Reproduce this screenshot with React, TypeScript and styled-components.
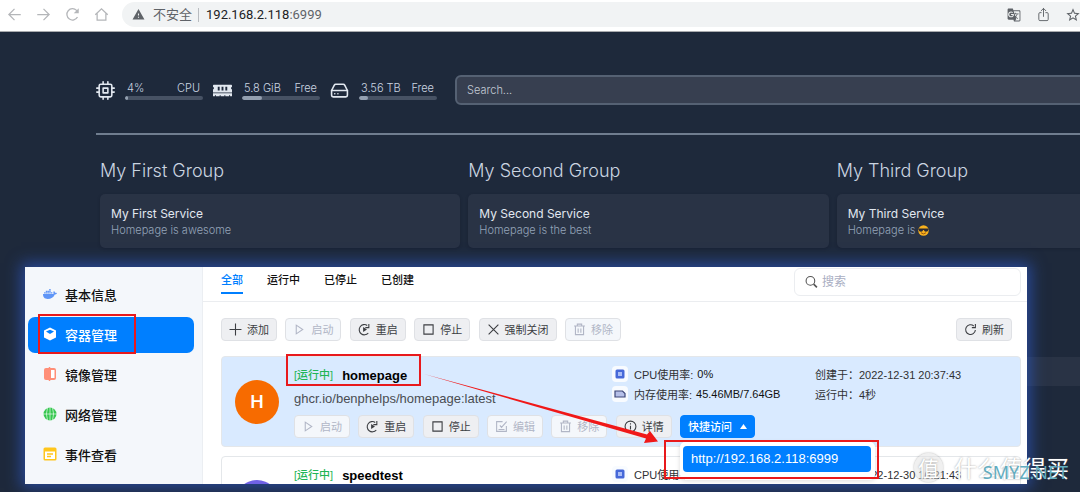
import React from "react";
import styled, { createGlobalStyle, css } from "styled-components";
import { FiCpu, FiHardDrive } from "react-icons/fi";
import { FaMemory, FaDocker } from "react-icons/fa";
import { MdGTranslate, MdStarBorder, MdWarning } from "react-icons/md";
import { IoShareOutline } from "react-icons/io5";

const Global = createGlobalStyle`
  *, *::before, *::after { box-sizing: border-box; }
  body { margin: 0; background: #1e293b; }
  button, input { font: inherit; }
  h2, h3, p, ul, dl, dd { margin: 0; padding: 0; }
`;

const uiFont = `"Liberation Sans", "Noto Sans CJK SC", sans-serif`;

const Page = styled.div`
  position: relative;
  min-height: 100vh;
  overflow: hidden;
  background: #1e293b;
  font-family: ${uiFont};
`;

/* ---------- Browser bar ---------- */

const BrowserBar = styled.header`
  display: flex;
  align-items: flex-start;
  height: 32px;
  padding: 2px 0 0 7px;
  background: #fff;
  border-bottom: 1px solid #a9abae;
`;

const NavButton = styled.button`
  display: grid;
  place-items: center;
  width: 29px;
  height: 25px;
  padding: 0 14px 0 0;
  border: 0;
  background: none;
  color: #b4b6b9;
`;

const AddressBar = styled.div`
  display: flex;
  flex: 1;
  align-items: center;
  height: 25px;
  margin-left: -1px;
  padding-left: 10px;
  border-radius: 13px 0 0 13px;
  background: #f1f3f4;
  color: #5f6368;
  font: 13px/25px Roboto, "Noto Sans CJK SC", sans-serif;
`;

const Insecure = styled.span`
  margin: 0 6px 0 8px;
`;

const Separator = styled.span`
  width: 1px;
  height: 14px;
  margin-right: 7px;
  background: #b9bcc0;
`;

const Host = styled.span`
  color: #202124;
`;

const AddressActions = styled.div`
  display: flex;
  gap: 15px;
  margin-left: auto;
  padding-right: 1px;
`;

const IconButton = styled.button`
  display: grid;
  place-items: center;
  width: 14px;
  height: 25px;
  padding: 0;
  border: 0;
  background: none;
  color: #5f6368;
`;

/* ---------- Dashboard ---------- */

const Dashboard = styled.main`
  width: 120%;
  padding: 43px 96px 0;
  color: #cbd5e1;
  font-family: Inter, sans-serif;
`;

const TopRow = styled.div`
  display: flex;
  align-items: center;
  padding-bottom: 28px;
  border-bottom: 2px solid #707d8f;
`;

const Resource = styled.div`
  display: flex;
  align-items: center;
  gap: 10px;
  margin-right: 10px;
  color: #e2e8f0;
`;

const ResourceBody = styled.div`
  width: 78px;
`;

const ResourceText = styled.div`
  display: flex;
  justify-content: space-between;
  padding: 0 3px 0 2px;
  color: #cbd5e1;
  font-size: 11px;
  font-weight: 300;
  line-height: 16px;
`;

const Meter = styled.div`
  height: 4px;
  border-radius: 2px;
  background: #475264;
  overflow: hidden;
`;

const MeterFill = styled.div`
  height: 100%;
  border-radius: 2px;
  background: #94a0b0;
`;

const SearchInput = styled.input`
  flex: 1;
  min-width: 0;
  height: 30px;
  margin-left: 8px;
  padding: 0 10px;
  border: 2px solid #556173;
  border-radius: 6px;
  outline: 0;
  background: #373f50;
  color: #e2e8f0;
  font-size: 11px;
  font-weight: 300;
  &::placeholder { color: #c3cad4; opacity: 1; }
`;

const Groups = styled.div`
  display: grid;
  grid-template-columns: repeat(3, 1fr);
  gap: 8px;
  padding: 24px 3px 0 4px;
`;

const GroupTitle = styled.h2`
  margin-bottom: 11px;
  color: #cbd5e1;
  font-size: 18px;
  font-weight: 300;
  line-height: 24px;
`;

const Service = styled.article`
  padding: 11px;
  border-radius: 5px;
  background: #293345;
  box-shadow: 0 1px 3px rgba(10, 16, 32, 0.25);
`;

const ServiceName = styled.h3`
  color: #e2e8f0;
  font-size: 12px;
  font-weight: 400;
  line-height: 18px;
`;

const ServiceNote = styled.p`
  display: flex;
  align-items: center;
  gap: 3px;
  color: #94a3b8;
  font-size: 11px;
  font-weight: 300;
  line-height: 14px;
`;

const LowerStrip = styled.div`
  height: 29px;
  margin: 109px 4px 0;
  border-radius: 5px;
  background: #293345;
`;

/* ---------- Container manager window ---------- */

const Window = styled.section`
  position: absolute;
  inset: 267px 53px 8px 25px;
  display: flex;
  background: #fff;
  box-shadow: 0 0 14px 4px rgba(46, 92, 206, 0.62);
  color: #303133;
  font-size: 11px;
`;

const Clip = styled.div`
  display: flex;
  flex: 1;
  min-width: 0;
  overflow: hidden;
`;

const Sidebar = styled.nav`
  display: flex;
  flex: none;
  flex-direction: column;
  gap: 4px;
  width: 178px;
  padding: 10px 8px 0 3px;
  border-right: 1px solid #ebeef2;
  background: #f4f7fb;
`;

const SideLink = styled.a<{ $active?: boolean }>`
  display: flex;
  flex: none;
  align-items: center;
  gap: 8px;
  height: 36px;
  padding: 0 0 2px 15px;
  border-radius: 7px;
  background: ${(p) => (p.$active ? "#007fff" : "none")};
  color: ${(p) => (p.$active ? "#fff" : "#111")};
  font-size: 13px;
  font-weight: 500;
  text-decoration: none;
`;

const Main = styled.div`
  flex: 1;
  min-width: 0;
`;

const TabBar = styled.div`
  display: flex;
  justify-content: space-between;
  height: 35px;
  padding: 0 6px 0 18px;
  border-bottom: 1px solid #ebedf0;
`;

const Tabs = styled.div`
  display: flex;
  gap: 24px;
`;

const Tab = styled.button<{ $active?: boolean }>`
  height: 27px;
  padding: 2px 0 0;
  border: 0;
  border-bottom: 2px solid ${(p) => (p.$active ? "#007fff" : "transparent")};
  background: none;
  color: ${(p) => (p.$active ? "#007fff" : "#111")};
  font-weight: 500;
  line-height: 23px;
`;

const SearchBox = styled.label`
  display: flex;
  align-items: center;
  gap: 4px;
  width: 227px;
  height: 28px;
  margin-top: 1px;
  padding: 0 10px;
  border: 1px solid #ebedf0;
  border-radius: 6px;
  color: #555;
`;

const SearchField = styled.input`
  flex: 1;
  min-width: 0;
  padding: 0;
  border: 0;
  outline: 0;
  background: none;
  font-size: 12px;
  &::placeholder { color: #a9aec2; opacity: 1; }
`;

const Toolbar = styled.div`
  display: flex;
  justify-content: space-between;
  padding: 16px 15px 15px 18px;
`;

const Actions = styled.div<{ $width: number }>`
  display: flex;
  justify-content: space-between;
  width: ${(p) => p.$width}px;
`;

const Button = styled.button<{ $primary?: boolean }>`
  display: flex;
  align-items: center;
  justify-content: center;
  gap: 5px;
  min-width: 56px;
  height: 23px;
  padding: 0 7px 1px;
  border: 1px solid #dfe1e5;
  border-radius: 4px;
  background: #eeeff2;
  color: #3c3e42;
  white-space: nowrap;
  &:disabled {
    background: #f4f7fb;
    color: #b1b6c6;
  }
  ${(p) =>
    p.$primary &&
    css`
      gap: 8px;
      min-width: 73px;
      border-color: #007fff;
      background: #007fff;
      color: #fff;
      font-weight: 500;
    `}
`;

const Cards = styled.div`
  display: flex;
  flex-direction: column;
  gap: 9px;
  padding: 0 6px 0 18px;
`;

const Card = styled.article<{ $selected?: boolean }>`
  display: flex;
  gap: 15px;
  height: 91px;
  padding: 7px 12px 6px 13px;
  border: 1px solid #e4e7ea;
  border-radius: 4px;
  background: ${(p) => (p.$selected ? "#d9eaff" : "#fff")};
`;

const Avatar = styled.div<{ $color: string }>`
  display: grid;
  flex: none;
  place-items: center;
  align-self: center;
  width: 44px;
  height: 44px;
  border-radius: 50%;
  background: ${(p) => p.$color};
  color: #fff;
  font: 500 19px/44px Roboto, sans-serif;
`;

const CardBody = styled.div`
  flex: 1;
  min-width: 0;
`;

const Details = styled.div`
  display: grid;
  grid-template-columns: 318px 203px 1fr;
  margin-bottom: 5px;
`;

const TitleLine = styled.h3`
  display: flex;
  align-items: center;
  gap: 9px;
  color: #000;
  font-size: 13px;
  line-height: 23px;
`;

const State = styled.span`
  color: #1fb556;
  font-size: 11px;
  font-weight: 500;
`;

const ImageName = styled.p`
  color: #4a4d52;
  font-size: 13px;
  line-height: 23px;
`;

const Fact = styled.div`
  display: flex;
  align-items: center;
  height: 20px;
  white-space: nowrap;
`;

const FactIcon = styled.span`
  display: grid;
  place-items: center;
  width: 16px;
  height: 16px;
  margin-right: 6px;
  border-radius: 4px;
  background: #f8fbff;
`;

const FactValue = styled.span`
  margin-left: 4px;
  color: #111;
`;

const Menu = styled.div`
  position: relative;
`;

const MenuPanel = styled.div`
  position: absolute;
  z-index: 2;
  top: 27px;
  left: 0;
  width: 195px;
  padding: 4px 4px 8px 3px;
  border-radius: 5px;
  background: #fff;
  box-shadow: 0 1px 5px rgba(0, 0, 0, 0.14);
`;

const MenuLink = styled.a`
  display: block;
  padding: 0 8px;
  border-radius: 4px;
  background: #007fff;
  color: #fff;
  font-size: 13px;
  line-height: 26px;
  text-decoration: none;
`;

/* ---------- Annotations over the page ---------- */

const Marker = styled.div<{ $x: number; $y: number; $w: number; $h: number }>`
  position: absolute;
  z-index: 3;
  left: ${(p) => p.$x}px;
  top: ${(p) => p.$y}px;
  width: ${(p) => p.$w}px;
  height: ${(p) => p.$h}px;
  border: 2px solid #e8191c;
  pointer-events: none;
`;

const Arrow = styled.svg`
  position: absolute;
  z-index: 3;
  left: 424px;
  top: 372px;
  pointer-events: none;
`;

const Watermark = styled.div`
  position: absolute;
  z-index: 4;
  right: 11px;
  bottom: 8px;
  display: flex;
  align-items: center;
  gap: 11px;
  color: #fff;
  font: 23px/34px "Noto Sans CJK SC", sans-serif;
  text-shadow: 0 0 2px rgba(90, 90, 90, 0.6);
  pointer-events: none;
`;

const Seal = styled.span`
  width: 29px;
  height: 29px;
  border-radius: 50%;
  background: rgba(225, 225, 225, 0.5);
  box-shadow: 0 0 2px rgba(90, 90, 90, 0.5);
  font-size: 21px;
  line-height: 28px;
  text-align: center;
`;

const SiteMark = styled.div`
  position: absolute;
  z-index: 5;
  right: 12px;
  bottom: 7px;
  color: #62adc0;
  font: 18px/26px "Noto Sans", sans-serif;
  pointer-events: none;
`;

/* ---------- Icons ---------- */

type IconProps = { size?: number; children: React.ReactNode };

const Line = ({ size = 13, children }: IconProps) => (
  <svg width={size} height={size} viewBox="0 0 24 24" fill="none" stroke="currentColor" strokeWidth="2" aria-hidden="true">
    {children}
  </svg>
);

const icons = {
  back: <Line size={15}><path d="M22 12H3M12 3l-9 9 9 9" /></Line>,
  forward: <Line size={15}><path d="M2 12h19M12 3l9 9-9 9" /></Line>,
  reload: <Line size={15}><path d="M20 16A9 9 0 1 1 18.500 5.500L20 7" /><path d="M22 2v8h-8z" fill="currentColor" stroke="none" /></Line>,
  home: <Line size={15}><path d="M2 12.500L12 3l10 9.500M5 10v11h14V10" /></Line>,
  plus: <Line><path d="M12 1v22M1 12h22" /></Line>,
  play: <Line><path d="M6 4l12 8-12 8z" /></Line>,
  restart: <Line><path d="M19 18.500A9.500 9.500 0 1 1 17 4.500" /><path d="M20 2v6.500h-6.500" /><path d="M9.500 7.500l7 4.500-7 4.500z" fill="currentColor" stroke="none" /></Line>,
  stop: <Line><path d="M3.500 3.500h17v17h-17z" /></Line>,
  close: <Line><path d="M3 3l18 18M21 3L3 21" /></Line>,
  trash: <Line><path d="M2 5.500h20M8 5V2h8v3M4.500 6v15.500h15V6M9.500 10v8M14.500 10v8" /></Line>,
  edit: <Line><path d="M14 3H3v18h18V11M6.500 17.500h11M9 10l3 3.500L21.500 3" /></Line>,
  info: <Line><circle cx="12" cy="12" r="10" /><path d="M12 10.500v7M12 6v2.500" /></Line>,
  refresh: <Line><path d="M21 13a9 9 0 1 1-3-7.500" /><path d="M21 2v6.500h-6.500" /></Line>,
  search: <Line><circle cx="10" cy="9" r="8" /><path d="M16 15l6 6" strokeWidth="3" /></Line>,
};

const ContainerIcon = () => (
  <svg width="14" height="14" viewBox="0 0 14 14" aria-hidden="true">
    <path d="M7 .5l6 3v7l-6 3-6-3v-7z" fill="#fff" />
    <path d="M3 4.500l4-1.800 4 1.800-4 2.500z" fill="#007fff" />
  </svg>
);

const ImagesIcon = () => (
  <svg width="14" height="14" viewBox="0 0 14 14" aria-hidden="true">
    <rect x="1" y="1" width="12" height="12" rx="2" fill="#ff8f78" />
    <rect x="8" y="3" width="3.500" height="8" fill="#fff" />
    <path d="M6.500 0v14" stroke="#ff8f78" strokeWidth="1.500" />
  </svg>
);

const NetworkIcon = () => (
  <svg width="14" height="14" viewBox="0 0 14 14" aria-hidden="true">
    <circle cx="7" cy="7" r="6.500" fill="#35c74f" />
    <path d="M0 7h14M7 0v14M4.500 .8q-2.200 6.200 0 12.400M9.500 .8q2.200 6.200 0 12.400" fill="none" stroke="#e9fbee" strokeWidth=".7" />
  </svg>
);

const EventsIcon = () => (
  <svg width="14" height="14" viewBox="0 0 14 14" aria-hidden="true">
    <rect x=".5" y=".5" width="13" height="13" rx="1.500" fill="#ffc61c" />
    <path d="M2 4.500h10V12H2z" fill="#fff" />
    <path d="M4 7h6M4 9.500h4" stroke="#ffc61c" strokeWidth="1.300" />
  </svg>
);

const ChipIcon = () => (
  <svg width="10" height="10" viewBox="0 0 10 10" aria-hidden="true">
    <rect x=".5" y=".5" width="9" height="9" rx="1.500" fill="#4668d8" />
    <rect x="3" y="3" width="4" height="4" fill="#a9bcf6" />
  </svg>
);

const RamIcon = () => (
  <svg width="12" height="8" viewBox="0 0 12 8" aria-hidden="true">
    <path d="M1 1h7.500L11 3.500V7H1z" fill="#b5bfe8" stroke="#3d4778" strokeWidth="1.200" />
  </svg>
);

const CaretUp = () => (
  <svg width="7" height="5" viewBox="0 0 7 5" aria-hidden="true">
    <path d="M3.500 0L7 5H0z" fill="currentColor" />
  </svg>
);

const CoolFace = () => (
  <svg width="11" height="11" viewBox="0 0 22 22" role="img" aria-label="😎">
    <circle cx="11" cy="11" r="10.500" fill="#f9b21d" />
    <path d="M1 7h20v2.500q-1 4-5 4-3.500 0-4.300-3.500h-1.400Q9.500 13.500 6 13.500q-4 0-5-4z" fill="#2b2a33" />
    <path d="M6 15.500q5 4.500 10 0" fill="none" stroke="#8a4b12" strokeWidth="1.800" />
  </svg>
);

/* ---------- Content ---------- */

const resources = [
  { icon: <FiCpu size={19} />, value: "4%", label: "CPU", used: 4 },
  { icon: <FaMemory size={19} />, value: "5.8 GiB", label: "Free", used: 25 },
  { icon: <FiHardDrive size={19} />, value: "3.56 TB", label: "Free", used: 11 },
];

const groups = [
  { title: "My First Group", name: "My First Service", note: "Homepage is awesome" },
  { title: "My Second Group", name: "My Second Service", note: "Homepage is the best" },
  { title: "My Third Group", name: "My Third Service", note: "Homepage is", cool: true },
];

const sections = [
  { label: "基本信息", icon: <FaDocker size={14} color="#5f95f7" /> },
  { label: "容器管理", icon: <ContainerIcon />, active: true },
  { label: "镜像管理", icon: <ImagesIcon /> },
  { label: "网络管理", icon: <NetworkIcon /> },
  { label: "事件查看", icon: <EventsIcon /> },
];

type Container = {
  name: string;
  image: string;
  letter: string;
  color: string;
  memory: string;
  created: string;
  uptime: string;
  selected?: boolean;
};

const containers: Container[] = [
  { name: "homepage", image: "ghcr.io/benphelps/homepage:latest", letter: "H", color: "#f76b00", memory: "45.46MB/7.64GB", created: "2022-12-31 20:37:43", uptime: "4秒", selected: true },
  { name: "speedtest", image: "", letter: "", color: "#7062e6", memory: "", created: "2022-12-30 16:21:43", uptime: "" },
];

const ContainerCard = ({ item }: { item: Container }) => (
  <Card $selected={item.selected}>
    <Avatar $color={item.color}>{item.letter}</Avatar>
    <CardBody>
      <Details>
        <div>
          <TitleLine>
            <State>[运行中]</State>
            {item.name}
          </TitleLine>
          {item.image && <ImageName>{item.image}</ImageName>}
        </div>
        <div>
          <Fact>
            <FactIcon><ChipIcon /></FactIcon>
            CPU使用率:{item.memory && <FactValue>0%</FactValue>}
          </Fact>
          {item.memory && (
            <Fact>
              <FactIcon><RamIcon /></FactIcon>
              内存使用率:<FactValue>{item.memory}</FactValue>
            </Fact>
          )}
        </div>
        <div>
          <Fact>创建于：{item.created}</Fact>
          {item.uptime && <Fact>运行中：{item.uptime}</Fact>}
        </div>
      </Details>
      {item.selected && (
        <Actions $width={461}>
          <Button disabled>{icons.play}启动</Button>
          <Button>{icons.restart}重启</Button>
          <Button>{icons.stop}停止</Button>
          <Button disabled>{icons.edit}编辑</Button>
          <Button disabled>{icons.trash}移除</Button>
          <Button>{icons.info}详情</Button>
          <Menu>
            <Button $primary aria-expanded="true">快捷访问<CaretUp /></Button>
            <MenuPanel>
              <MenuLink href="#open">http://192.168.2.118:6999</MenuLink>
            </MenuPanel>
          </Menu>
        </Actions>
      )}
    </CardBody>
  </Card>
);

export default function App() {
  return (
    <Page>
      <Global />
      <BrowserBar>
        <NavButton aria-label="Back">{icons.back}</NavButton>
        <NavButton aria-label="Forward">{icons.forward}</NavButton>
        <NavButton aria-label="Reload">{icons.reload}</NavButton>
        <NavButton aria-label="Home">{icons.home}</NavButton>
        <AddressBar>
          <MdWarning size={13} />
          <Insecure>不安全</Insecure>
          <Separator />
          <Host>192.168.2.118</Host>:6999
          <AddressActions>
            <IconButton aria-label="Translate"><MdGTranslate size={14} /></IconButton>
            <IconButton aria-label="Share"><IoShareOutline size={15} /></IconButton>
            <IconButton aria-label="Bookmark"><MdStarBorder size={16} /></IconButton>
          </AddressActions>
        </AddressBar>
      </BrowserBar>

      <Dashboard>
        <TopRow>
          {resources.map((r) => (
            <Resource key={r.value}>
              {r.icon}
              <ResourceBody>
                <ResourceText><span>{r.value}</span><span>{r.label}</span></ResourceText>
                <Meter><MeterFill style={{ width: `${r.used}%` }} /></Meter>
              </ResourceBody>
            </Resource>
          ))}
          <SearchInput type="text" placeholder="Search..." aria-label="Search" />
        </TopRow>
        <Groups>
          {groups.map((g) => (
            <section key={g.title}>
              <GroupTitle>{g.title}</GroupTitle>
              <Service>
                <ServiceName>{g.name}</ServiceName>
                <ServiceNote>{g.note}{g.cool && <CoolFace />}</ServiceNote>
              </Service>
            </section>
          ))}
        </Groups>
        <LowerStrip />
      </Dashboard>

      <Window>
        <Clip>
          <Sidebar>
            {sections.map((s) => (
              <SideLink key={s.label} href="#section" $active={s.active}>{s.icon}{s.label}</SideLink>
            ))}
          </Sidebar>
          <Main>
            <TabBar>
              <Tabs>
                <Tab $active>全部</Tab>
                <Tab>运行中</Tab>
                <Tab>已停止</Tab>
                <Tab>已创建</Tab>
              </Tabs>
              <SearchBox>
                {icons.search}
                <SearchField type="text" placeholder="搜索" aria-label="搜索" />
              </SearchBox>
            </TabBar>
            <Toolbar>
              <Actions $width={400}>
                <Button>{icons.plus}添加</Button>
                <Button disabled>{icons.play}启动</Button>
                <Button>{icons.restart}重启</Button>
                <Button>{icons.stop}停止</Button>
                <Button>{icons.close}强制关闭</Button>
                <Button disabled>{icons.trash}移除</Button>
              </Actions>
              <Button>{icons.refresh}刷新</Button>
            </Toolbar>
            <Cards>
              {containers.map((c) => <ContainerCard key={c.name} item={c} />)}
            </Cards>
          </Main>
        </Clip>
      </Window>

      <Marker $x={38} $y={314} $w={98} $h={40} />
      <Marker $x={286} $y={354} $w={135} $h={32} />
      <Marker $x={664} $y={440} $w={215} $h={39} />
      <Arrow width="236" height="74" viewBox="0 0 236 74" aria-hidden="true">
        <path d="M0 2L223 62.500L226 59L234 69.500L220 71L222 66.500Z" fill="#f01818" />
      </Arrow>
      <Watermark><Seal>值</Seal>什么值得买</Watermark>
      <SiteMark>SMYZ.NET</SiteMark>
    </Page>
  );
}
